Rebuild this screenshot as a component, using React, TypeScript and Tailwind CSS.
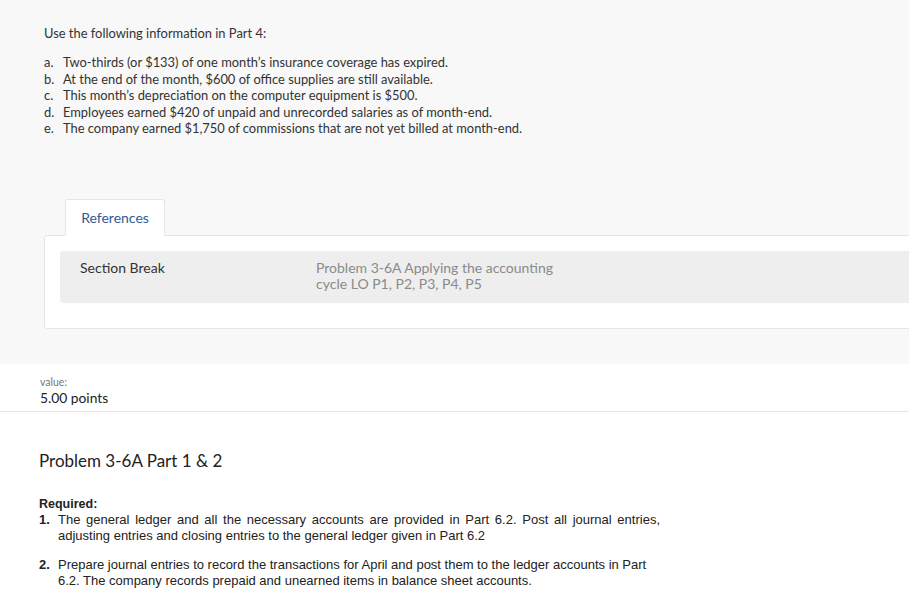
import React from "react";

const items: [string, string][] = [
  ["a.", "Two-thirds (or $133) of one month\u2019s insurance coverage has expired."],
  ["b.", "At the end of the month, $600 of office supplies are still available."],
  ["c.", "This month\u2019s depreciation on the computer equipment is $500."],
  ["d.", "Employees earned $420 of unpaid and unrecorded salaries as of month-end."],
  ["e.", "The company earned $1,750 of commissions that are not yet billed at month-end."],
];

export default function App() {
  return (
    <div className="w-[909px] h-[603px] overflow-hidden bg-white" style={{ fontFamily: "Lato, 'Open Sans', sans-serif" }}>
      <div className="bg-[#f8f8f8] h-[364px] pt-[25px]">
        <div className="pl-[44px] text-[12.9px] text-[#333] leading-[16px]">
          <p>Use the following information in Part 4:</p>
          <ol className="mt-[13px] leading-[16.5px]">
            {items.map(([l, t]) => (
              <li key={l} className="flex">
                <span className="w-[19px] shrink-0">{l}</span>
                <span>{t}</span>
              </li>
            ))}
          </ol>
        </div>
        <div className="mt-[62px] pl-[44px]">
          <div className="ml-[21px] w-[100px] h-[37px] bg-white border border-b-0 border-[#e6e6e6] rounded-t-[3px] flex items-center justify-center relative z-10 -mb-px">
            <span className="text-[14px] text-[#2d5b94]">References</span>
          </div>
          <div className="w-[900px] h-[94px] bg-white border border-[#e6e6e6] rounded-[3px] pt-[15px] pl-[15px]">
            <div className="h-[52px] bg-[#eeeeee] rounded-[3px] flex pt-[9px]">
              <div className="w-[256px] pl-[20px] text-[14px] text-[#333] leading-[16px]">Section Break</div>
              <div className="text-[14px] text-[#8a8a8a] leading-[16px] w-[280px]">
                Problem 3-6A Applying the accounting
                <br />
                cycle LO P1, P2, P3, P4, P5
              </div>
            </div>
          </div>
        </div>
      </div>
      <div className="pt-[12px] pl-[40px] border-b border-[#e6e6e6] pb-[4px]">
        <div className="text-[10.5px] text-[#777] leading-[13px]">value:</div>
        <div className="text-[13.8px] text-[#222] leading-[18px]">5.00 points</div>
      </div>
      <div className="pl-[39px]">
        <h2 className="mt-[38px] text-[17px] text-[#222] leading-[22px]">Problem 3-6A Part 1 &amp; 2</h2>
        <div className="mt-[24px] text-[13px] text-[#222] leading-[16px]" style={{ fontFamily: "'Liberation Sans', Arial, sans-serif" }}>
          <div className="font-bold text-[12.5px]">Required:</div>
          <div className="flex">
            <span className="w-[19px] shrink-0 font-bold">1.</span>
            <p className="text-justify w-[602px]">The general ledger and all the necessary accounts are provided in Part 6.2. Post all journal entries, adjusting entries and closing entries to the general ledger given in Part 6.2</p>
          </div>
          <div className="flex mt-[13px]">
            <span className="w-[19px] shrink-0 font-bold">2.</span>
            <p className="w-[602px]">Prepare journal entries to record the transactions for April and post them to the ledger accounts in Part 6.2. The company records prepaid and unearned items in balance sheet accounts.</p>
          </div>
        </div>
      </div>
    </div>
  );
}
